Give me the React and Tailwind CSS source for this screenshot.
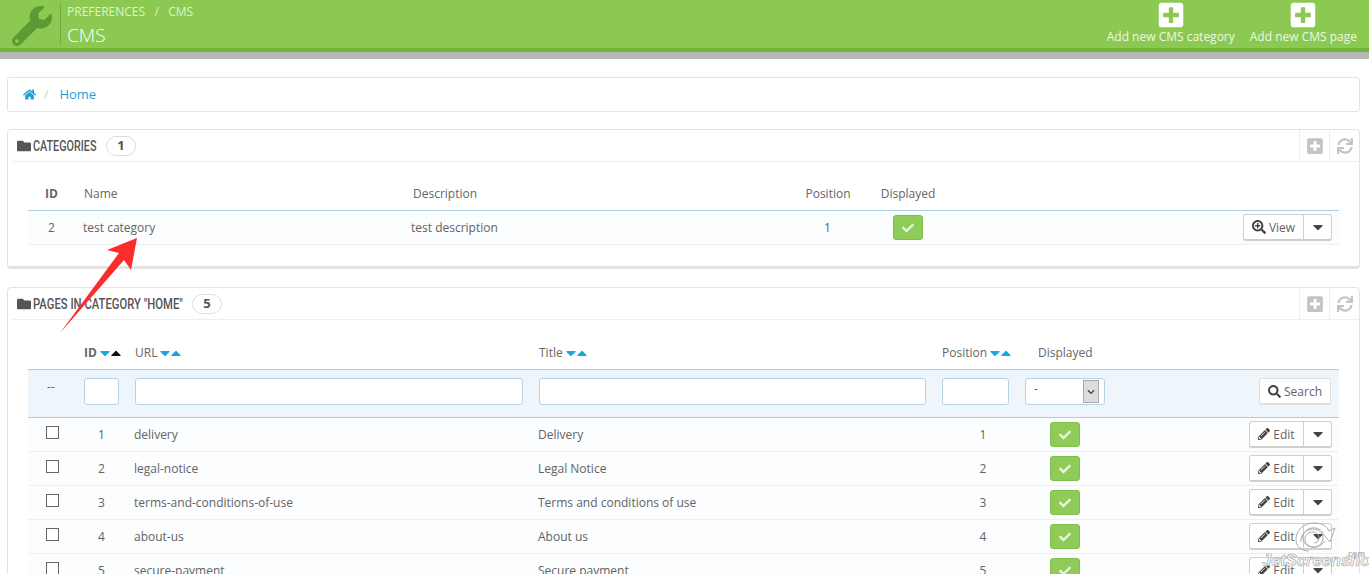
import React from "react";
import { FaWrench, FaHome, FaFolder, FaPlusSquare, FaSync, FaSearchPlus, FaCaretDown, FaCaretUp, FaCheck, FaPencilAlt, FaSearch, FaChevronDown } from "react-icons/fa";

function PanelHead({ title, count, titleClass }) {
  return (
    <div className="relative ml-[5px] mr-0 h-[32px] flex items-center border-b border-[#eeeeee]">
      <FaFolder className="ml-[4px] text-[#555555] text-[14px]" />
      <span className={`${titleClass} ml-[2px] pt-[2px] inline-block origin-left whitespace-nowrap font-['Roboto',sans-serif] font-medium text-[14px] text-[#555555] uppercase`}>{title}</span>
      <span className="ml-[9px] h-[20px] w-[30px] rounded-full border border-[#dddddd] flex items-center justify-center text-[13px] font-bold text-[#555555]">{count}</span>
      <div className="ml-auto flex h-[31px] items-center">
        <div className="w-[30px] h-full border-l border-[#eeeeee] flex items-center justify-center">
          <FaPlusSquare className="text-[#c4c4c4] text-[18px]" />
        </div>
        <div className="w-[30px] h-full border-l border-[#eeeeee] flex items-center justify-center">
          <FaSync className="text-[#c4c4c4] text-[16px]" />
        </div>
      </div>
    </div>
  );
}

function Status() {
  return (
    <span className="w-[30px] h-[25px] rounded-[3px] bg-[#8fcb59] border border-[#82bd4e] flex items-center justify-center">
      <FaCheck className="text-[#e6f4d8] text-[12px]" />
    </span>
  );
}

function SplitButton({ icon, label, width }) {
  return (
    <div className={`${width} h-[27px] flex rounded-[3px] bg-white border border-[#cfcfcf] border-b-2 text-[12px] text-[#636363]`}>
      <div className="flex-1 flex items-center justify-center gap-[3px]">
        {icon}
        <span className="pt-[1px]">{label}</span>
      </div>
      <div className="w-[28px] border-l border-[#cfcfcf] flex items-center justify-center">
        <FaCaretDown className="text-[#444444] text-[16px]" />
      </div>
    </div>
  );
}

function Sort({ label, active, bold }) {
  return (
    <span className={`flex items-center ${bold ? "font-bold" : ""}`}>
      <span>{label}</span>
      <FaCaretDown className="text-[#1ba6dc] text-[16px]" />
      <FaCaretUp className={`-ml-[5px] text-[16px] ${active ? "text-[#111111]" : "text-[#1ba6dc]"}`} />
    </span>
  );
}

const rows = [
  ["1", "delivery", "Delivery", "1"],
  ["2", "legal-notice", "Legal Notice", "2"],
  ["3", "terms-and-conditions-of-use", "Terms and conditions of use", "3"],
  ["4", "about-us", "About us", "4"],
  ["5", "secure-payment", "Secure payment", "5"],
];

const input = "h-[27px] rounded-[3px] bg-white border border-[#b5d3e2]";
const pageCols = "grid grid-cols-[56px_51px_404px_403px_83px_100px_1fr]";

export default function App() {
  return (
    <div className="relative h-[574px] w-[1369px] overflow-hidden bg-white font-['Open_Sans',sans-serif] text-[12px] text-[#636363]">
      {/* top bar */}
      <header className="h-[52px] bg-[#8bc953] border-b-[4px] border-[#72b33a] flex">
        <div className="w-[60px] h-[48px] pl-[12px] pt-[6px]">
          <FaWrench className="text-[#5d9a33] text-[40px]" />
        </div>
        <div className="mt-[3px] h-[42px] border-l border-[#6fae3b] pl-[6px] text-[#dff2cc]">
          <div className="h-[15px] pt-[1px] leading-[16px] text-[12px] whitespace-pre">PREFERENCES   /   CMS</div>
          <div className="mt-[6px] text-[19px] font-light leading-[22px] text-white">CMS</div>
        </div>
        <div className="ml-auto flex items-start text-[12px] text-[#eef8e4] pr-[12px] gap-[15px]">
          <div className="flex flex-col items-center pt-[1px]">
            <FaPlusSquare className="text-white text-[28px]" />
            <span className="leading-[14px] mt-[1px]">Add new CMS category</span>
          </div>
          <div className="flex flex-col items-center pt-[1px]">
            <FaPlusSquare className="text-white text-[28px]" />
            <span className="leading-[14px] mt-[1px]">Add new CMS page</span>
          </div>
        </div>
      </header>
      <div className="h-[7px] bg-[#b8b8b6]" />

      <main className="px-[7px] pr-[9px] pt-[18px]">
        {/* breadcrumb */}
        <nav className="h-[35px] rounded-[3px] border border-[#e3e3e3] flex items-center pl-[15px] text-[13px]">
          <FaHome className="text-[#1ba1d6] text-[13px]" />
          <span className="ml-[8px] text-[#cccccc] text-[12px]">/</span>
          <span className="ml-[11px] text-[#1ba1d6]">Home</span>
        </nav>

        {/* categories */}
        <section className="mt-[17px] h-[140px] rounded-[4px] border border-[#e3e3e3] border-b-[3px]">
          <PanelHead title="Categories" count="1" titleClass="w-[64px] scale-x-[0.77]" />
          <div className="mx-[20px] mt-[15px]">
            <div className="h-[34px] grid grid-cols-[56px_329px_379px_72px_88px_1fr] items-center border-b border-[#a9d0de] text-[#666666]">
              <span className="pl-[17px] font-bold">ID</span>
              <span>Name</span>
              <span>Description</span>
              <span className="text-center">Position</span>
              <span className="text-center">Displayed</span>
              <span />
            </div>
            <div className="h-[34px] grid grid-cols-[55px_328px_379px_74px_88px_1fr] items-center border-b border-[#eeeeee] bg-[#fbfdfe]">
              <span className="pl-[20px]">2</span>
              <span>test category</span>
              <span>test description</span>
              <span className="text-center pl-[1px]">1</span>
              <span className="flex justify-center"><Status /></span>
              <span className="flex justify-end pr-[7px]">
                <SplitButton width="w-[89px]" label="View" icon={<FaSearchPlus className="text-[#444444] text-[14px]" />} />
              </span>
            </div>
          </div>
        </section>

        {/* pages */}
        <section className="mt-[18px] h-[400px] rounded-[4px] border border-[#e3e3e3]">
          <PanelHead title={'Pages in category "Home"'} count="5" titleClass="w-[150px] scale-x-[0.805]" />
          <div className="mx-[20px] mt-[15px]">
            <div className={`${pageCols} h-[34px] items-center text-[#666666] pt-[2px]`}>
              <span />
              <Sort label="ID" active bold />
              <Sort label="URL" />
              <Sort label="Title" />
              <Sort label="Position" />
              <span className="pl-[13px]">Displayed</span>
              <span />
            </div>
            <div className={`${pageCols} h-[49px] pb-[4px] items-center bg-[#eef6fb] border-y border-[#a8cfe0]`}>
              <span className="pl-[19px] pb-[10px]">--</span>
              <span className={`${input} w-[35px]`} />
              <span className={`${input} w-[388px]`} />
              <span className={`${input} w-[387px]`} />
              <span className={`${input} w-[67px]`} />
              <span className={`${input} w-[80px] relative flex`}>
                <span className="pl-[8px] leading-[20px]">-</span>
                <span className="absolute right-[5px] top-[1px] bottom-[1px] w-[16px] bg-[#dddddd] border border-[#aaaaaa] flex items-center justify-center">
                  <FaChevronDown className="text-[#444444] text-[8px]" />
                </span>
              </span>
              <span className="flex justify-end pr-[8px]">
                <span className="w-[72px] h-[27px] rounded-[3px] bg-white border border-[#dddddd] border-b-2 flex items-center justify-center gap-[3px]">
                  <FaSearch className="text-[#444444] text-[13px]" />
                  <span className="pt-[1px]">Search</span>
                </span>
              </span>
            </div>
            {rows.map((r) => (
              <div key={r[0]} className="grid grid-cols-[55px_51px_404px_404px_83px_100px_1fr] h-[34px] items-center border-b border-[#eeeeee] bg-[#fbfdfe]">
                <span className="pl-[18px] pb-[4px]">
                  <span className="block w-[13px] h-[13px] border border-[#666666] bg-white" />
                </span>
                <span className="pl-[15px]">{r[0]}</span>
                <span>{r[1]}</span>
                <span>{r[2]}</span>
                <span className="text-center pr-[1px]">{r[3]}</span>
                <span className="pl-[25px]"><Status /></span>
                <span className="flex justify-end pr-[7px]">
                  <SplitButton width="w-[83px]" label="Edit" icon={<FaPencilAlt className="text-[#444444] text-[12px]" />} />
                </span>
              </div>
            ))}
          </div>
        </section>
      </main>

      {/* annotation arrow */}
      <svg className="absolute left-[55px] top-[232px] w-[90px] h-[106px]" viewBox="55 232 90 106">
        <polygon points="137,238 107,250 119,253 60,333 124,260 131,270" fill="#fb2c2c" />
      </svg>

      {/* watermark */}
      <div className="absolute left-[1262px] top-[518px] w-[107px] h-[56px]">
        <svg className="absolute left-[32px] top-[3px] w-[42px] h-[31px]" viewBox="0 0 42 31" fill="none" stroke="#ababab" strokeWidth="1">
          <path d="M2 20C1 9 10 2 20 2c8 0 13 3 15 8l6-3-5 14-6-7c-2-5-7-8-12-7-6 1-10 6-9 11 1 6 7 9 13 8 4-1 7-3 9-6" />
          <path d="M7 21c-1-7 5-13 12-13 6 0 10 4 10 9s-4 9-9 9-9-3-9-8 4-7 8-7 6 3 6 6-2 5-5 5" />
          <path d="M2 20c1 6 6 10 13 10" />
        </svg>
        <span className="absolute right-[4px] top-[30px] text-[8px] font-bold text-[#b4b4b4]">.com</span>
        <span className="absolute left-0 top-[32px] font-['Liberation_Sans',sans-serif] italic font-bold text-[16.5px] leading-[20px] whitespace-nowrap text-[#ffffffcc] [-webkit-text-stroke:0.7px_#a8a8a8]">JetScreenshot</span>
      </div>
    </div>
  );
}
